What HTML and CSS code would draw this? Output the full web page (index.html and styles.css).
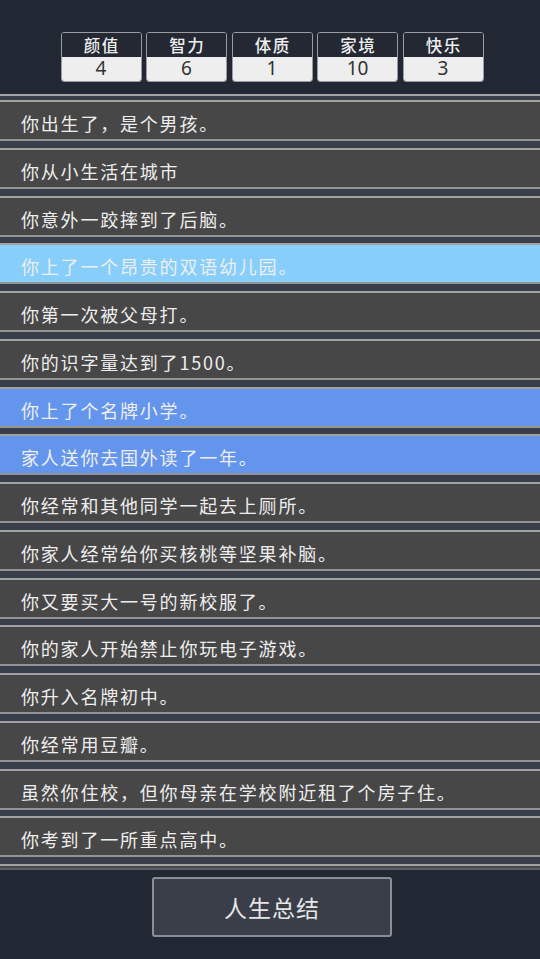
FILE: index.html
```html
<!DOCTYPE html>
<html lang="zh-CN">
<head>
<meta charset="utf-8">
<title>人生重开</title>
<link rel="stylesheet" href="styles.css">
</head>
<body>
<div class="page">
  <header class="header">
    <div class="stats">
      <div class="stat"><div class="stat-label">颜值</div><div class="stat-value">4</div></div>
      <div class="stat"><div class="stat-label">智力</div><div class="stat-value">6</div></div>
      <div class="stat"><div class="stat-label">体质</div><div class="stat-value">1</div></div>
      <div class="stat"><div class="stat-label">家境</div><div class="stat-value">10</div></div>
      <div class="stat"><div class="stat-label">快乐</div><div class="stat-value">3</div></div>
    </div>
  </header>
  <ul class="events">
    <li class="event">你出生了，是个男孩。</li>
    <li class="event">你从小生活在城市</li>
    <li class="event">你意外一跤摔到了后脑。</li>
    <li class="event event-rare">你上了一个昂贵的双语幼儿园。</li>
    <li class="event">你第一次被父母打。</li>
    <li class="event">你的识字量达到了1500。</li>
    <li class="event event-good">你上了个名牌小学。</li>
    <li class="event event-good">家人送你去国外读了一年。</li>
    <li class="event">你经常和其他同学一起去上厕所。</li>
    <li class="event">你家人经常给你买核桃等坚果补脑。</li>
    <li class="event">你又要买大一号的新校服了。</li>
    <li class="event">你的家人开始禁止你玩电子游戏。</li>
    <li class="event">你升入名牌初中。</li>
    <li class="event">你经常用豆瓣。</li>
    <li class="event">虽然你住校，但你母亲在学校附近租了个房子住。</li>
    <li class="event">你考到了一所重点高中。</li>
    <li class="event"></li>
  </ul>
  <div class="footer">
    <button class="summary-btn" type="button">人生总结</button>
  </div>
</div>
</body>
</html>
```
FILE: styles.css
```css
* { box-sizing: border-box; }
html, body {
  margin: 0;
  padding: 0;
  background: #222833;
}
body {
  font-family: "Noto Sans CJK SC", "Noto Sans", sans-serif;
  color: #eeeeee;
}
.page {
  width: 540px;
  height: 959px;
  display: flex;
  flex-direction: column;
  overflow: hidden;
}
.header {
  height: 94px;
  padding: 32px 0 0 4px;
  display: flex;
  justify-content: center;
}
.stats {
  display: flex;
  gap: 4.5px;
}
.stat {
  width: 81px;
  height: 50px;
  border: 1.5px solid #9a9ca0;
  border-radius: 3px;
  overflow: hidden;
  display: flex;
  flex-direction: column;
}
.stat-label {
  height: 24px;
  background: #232833;
  color: #eeeeee;
  font-size: 16.5px;
  font-weight: 500;
  line-height: 24px;
  text-align: center;
  letter-spacing: 1.5px;
  text-indent: 1.5px;
}
.stat-value {
  flex: 1;
  background: #eeeeee;
  color: #333333;
  font-family: "Noto Sans", sans-serif;
  font-size: 19px;
  line-height: 23px;
  text-align: center;
}
.events {
  list-style: none;
  margin: 0;
  padding: 4px 0 0;
  height: 776px;
  overflow: hidden;
  background: #393e4a;
  border-top: 2px solid #a4a6aa;
  border-bottom: 2px solid #5a5f68;
  flex: none;
}
.event {
  height: 41px;
  margin-bottom: 6.75px;
  background: #474747;
  border-top: 2px solid #a2a2a2;
  border-bottom: 2px solid #949494;
  padding: 7px 0 0 21px;
  font-size: 18px;
  letter-spacing: 1.8px;
  line-height: 29px;
  color: #eeeeee;
  white-space: nowrap;
  overflow: hidden;
}
.event-rare { background: #87cefa; }
.event-good { background: #6495ed; }
.footer {
  flex: 1;
  display: flex;
  justify-content: center;
  align-items: flex-start;
  padding: 7px 0 0 4px;
}
.summary-btn {
  width: 240px;
  height: 60px;
  background: #393e49;
  border: 2px solid #8a8e96;
  border-radius: 3px;
  color: #e6e6e6;
  font-family: "Noto Sans CJK SC", "Noto Sans", sans-serif;
  font-size: 23px;
  letter-spacing: 1px;
  padding: 0;
}
```
